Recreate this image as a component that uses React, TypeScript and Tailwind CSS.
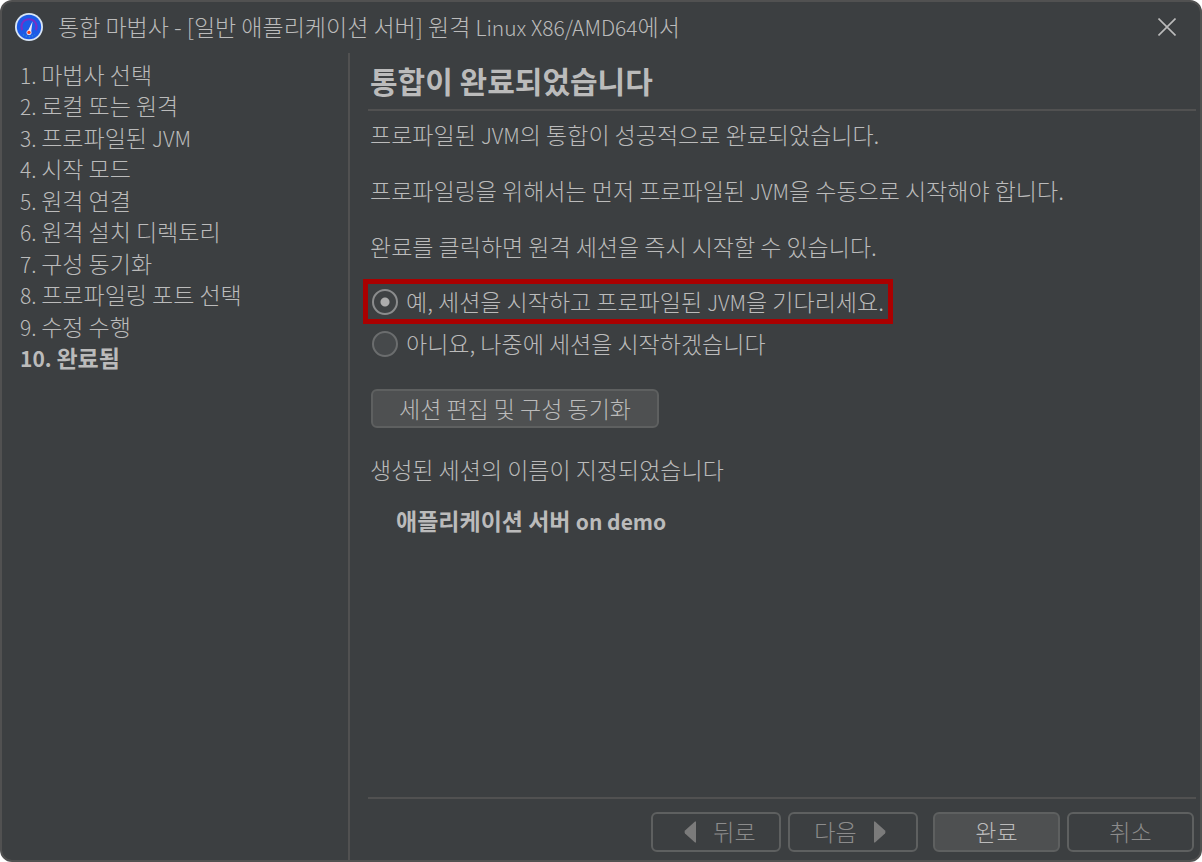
import { useState, type ReactNode } from "react";

const steps: ReactNode[] = [
  "마법사 선택",
  "로컬 또는 원격",
  <>프로파일된 <Latin>JVM</Latin></>,
  "시작 모드",
  "원격 연결",
  "원격 설치 디렉토리",
  "구성 동기화",
  "프로파일링 포트 선택",
  "수정 수행",
  "완료됨",
];

/* Latin letters and digits are set slightly smaller than the Hangul around them. */
function Latin({ children }: { children: ReactNode }) {
  return <span className="text-[21px] leading-none">{children}</span>;
}

function AppIcon() {
  return (
    <svg viewBox="0 0 28 28" className="size-7 shrink-0" aria-hidden="true">
      <circle cx="14" cy="14" r="14" fill="#d9e6f5" />
      <circle cx="14" cy="14" r="12.2" fill="#1d5be6" />
      <path d="M7.2 17.2A7.6 7.6 0 1 1 20.8 17.2" fill="none" stroke="#7a2fc4" strokeWidth="2" />
      <path d="M8 21.5a9.5 9.5 0 0 0 12 0" fill="none" stroke="#2a8bd8" strokeWidth="1.5" strokeDasharray="1.5 1.5" />
      <path d="M17.6 8.2l-1.6 11.2-3.4-1z" fill="#f3e9f5" />
      <circle cx="14" cy="19.4" r="2.5" fill="#f3e9f5" />
      <circle cx="14" cy="19.4" r="1.7" fill="#f0401f" />
    </svg>
  );
}

function Arrow({ back = false }: { back?: boolean }) {
  return (
    <svg viewBox="0 0 12 22" className="mt-0.5 h-[22px] w-3 shrink-0" fill="#7b7b7b" aria-hidden="true">
      <path d={back ? "M12 0.5V21.5H11L1 12.5Q0 11 1 9.5L11 0.5Z" : "M0 0.5V21.5H1L11 12.5Q12 11 11 9.5L1 0.5Z"} />
    </svg>
  );
}

function Choice({ label, checked, onSelect }: { label: ReactNode; checked: boolean; onSelect: () => void }) {
  return (
    <label className="flex items-center gap-2">
      <input
        type="radio"
        name="start"
        checked={checked}
        onChange={onSelect}
        className="size-[26px] shrink-0 appearance-none rounded-full border-2 border-[#6b6d6e] bg-[#46494b] checked:border-[#8b8c8d] checked:bg-[radial-gradient(circle,#adadad_4px,#3f4244_5px)]"
      />
      <span className="pb-0.5">{label}</span>
    </label>
  );
}

const button = "flex items-center justify-center rounded-md border-2 border-[#5e6060] pb-0.5";

export default function App() {
  const [startNow, setStartNow] = useState(true);

  return (
    <div className="flex min-h-screen flex-col rounded-xl border-2 border-[#515151] bg-[#3c3f41] font-['Noto_Sans_CJK_KR',sans-serif] text-[23px] leading-8 font-light text-[#bbbbbb]">
      <header className="flex h-[49px] items-center gap-[15px] pr-6 pl-[13px]">
        <AppIcon />
        <h1 className="grow pb-0.5">
          통합 마법사 - [일반 애플리케이션 서버] 원격 <Latin>Linux X86/AMD64</Latin>에서
        </h1>
        <button type="button" aria-label="닫기">
          <svg viewBox="0 0 18 18" className="size-[18px]" fill="none" stroke="#bbbbbb" strokeWidth="1.6" aria-hidden="true">
            <path d="M0.5 0.5L17.5 17.5M17.5 0.5L0.5 17.5" />
          </svg>
        </button>
      </header>

      <div className="mt-0.5 flex grow">
        <nav className="w-[348px] shrink-0 border-r-2 border-[#515151] pt-1.5 pl-[18px]">
          <ol className="flex h-[314px] flex-col justify-between leading-[31px]">
            {steps.map((step, i) => (
              <li key={i} className={i === steps.length - 1 ? "font-bold" : ""}>
                <Latin>{i + 1}. </Latin>
                {step}
              </li>
            ))}
          </ol>
        </nav>

        <div className="flex grow flex-col pr-1 pl-[18px]">
          <h2 className="flex h-[58px] items-center border-b-2 border-[#515151] pb-0.5 pl-0.5 text-[30px] font-bold">
            통합이 완료되었습니다
          </h2>
          <main className="grow pt-[7px] pl-0.5">
            <p>프로파일된 <Latin>JVM</Latin>의 통합이 성공적으로 완료되었습니다.</p>
            <p className="mt-6">프로파일링을 위해서는 먼저 프로파일된 <Latin>JVM</Latin>을 수동으로 시작해야 합니다.</p>
            <p className="mt-6">완료를 클릭하면 원격 세션을 즉시 시작할 수 있습니다.</p>
            <div className="mt-[17px] -ml-[7px] flex h-[45px] w-fit items-center border-[5px] border-[#aa0000] px-1">
              <Choice
                label={<>예, 세션을 시작하고 프로파일된 <Latin>JVM</Latin>을 기다리세요.</>}
                checked={startNow}
                onSelect={() => setStartNow(true)}
              />
            </div>
            <div className="mt-[3px] pl-0.5">
              <Choice label="아니요, 나중에 세션을 시작하겠습니다" checked={!startNow} onSelect={() => setStartNow(false)} />
            </div>
            <button type="button" className={`${button} mt-7 ml-px h-[39px] w-[288px] bg-[#4e5051]`}>
              세션 편집 및 구성 동기화
            </button>
            <p className="mt-[25px]">생성된 세션의 이름이 지정되었습니다</p>
            <p className="mt-[19px] pl-[26px] font-bold">애플리케이션 서버 <Latin>on demo</Latin></p>
          </main>
          <footer className="flex justify-end border-t-2 border-[#515151] pt-[13px] pr-0.5 pb-2 text-[#8c8c8c]">
            <button type="button" disabled className={`${button} h-10 w-[130px] gap-[17px] pl-2`}>
              <Arrow back />
              뒤로
            </button>
            <button type="button" disabled className={`${button} ml-[7px] h-10 w-[130px] gap-[17px] pr-1.5`}>
              다음
              <Arrow />
            </button>
            <button type="button" className={`${button} ml-[15px] h-10 w-[127px] bg-[#4e5051] text-[#bbbbbb]`}>
              완료
            </button>
            <button type="button" className={`${button} ml-[7px] h-10 w-[127px]`}>
              취소
            </button>
          </footer>
        </div>
      </div>
    </div>
  );
}
